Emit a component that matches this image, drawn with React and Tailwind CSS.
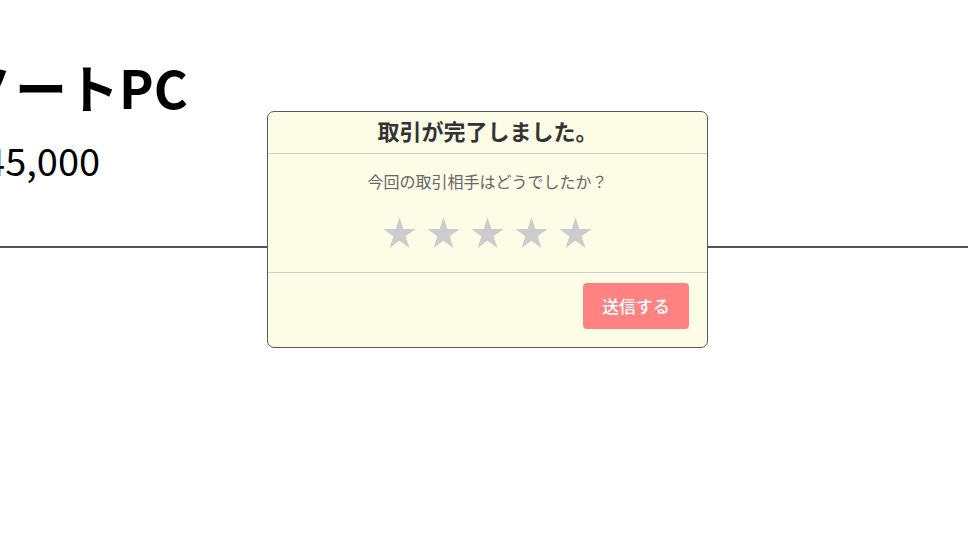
import { useState } from 'react'

const font = { fontFamily: '"Noto Sans CJK JP", "Noto Sans", sans-serif' }

// five-point star, inner radius ~0.4 of outer like the ★ glyph
const STAR = '12,1.5 14.47,9.1 22.47,9.1 16,13.8 18.47,21.4 12,16.7 5.53,21.4 8,13.8 1.53,9.1 9.53,9.1'

function Star({ active }) {
  return (
    <svg viewBox="0 0 24 24" className="w-[37px] h-[37px]">
      <polygon points={STAR} fill={active ? '#f5b400' : '#cccccc'} />
    </svg>
  )
}

export default function App() {
  const [rating, setRating] = useState(0)

  return (
    <div className="relative min-h-[547px] bg-white overflow-hidden" style={font}>
      {/* Item detail */}
      <div className="pt-[61px] text-black">
        <h1 className="-ml-[37px] text-[52px] font-bold leading-none whitespace-nowrap">ノートPC</h1>
        <p className="-ml-[37px] mt-[28px] text-[38px] leading-none whitespace-nowrap">¥45,000</p>
      </div>
      <hr className="mt-[67px] border-0 h-[2px] bg-[#555555]" />

      {/* Review modal */}
      <div className="absolute left-[267px] top-[111px] w-[441px] h-[237px] flex flex-col bg-[#fdfce7] border border-[#5a5a5a] rounded-[7px]">
        <div className="h-[42px] flex items-center justify-center border-b border-[#cfcfcf]">
          <h2 className="text-[22px] font-bold text-[#333333] leading-none -mt-[6px]">取引が完了しました。</h2>
        </div>
        <div className="h-[119px] flex flex-col items-center border-b border-[#cfcfcf]">
          <p className="mt-[19px] text-[16px] text-[#666666] leading-none">今回の取引相手はどうでしたか？</p>
          <div className="mt-[26px] flex gap-[7px]">
            {[1, 2, 3, 4, 5].map((n) => (
              <button key={n} onClick={() => setRating(n)} className="p-0">
                <Star active={n <= rating} />
              </button>
            ))}
          </div>
        </div>
        <div className="flex-1 flex justify-end items-start pt-[10px] pr-[18px]">
          <button className="w-[106px] h-[46px] rounded-[4px] bg-[#ff8282] text-white text-[17px] font-medium">
            送信する
          </button>
        </div>
      </div>
    </div>
  )
}
